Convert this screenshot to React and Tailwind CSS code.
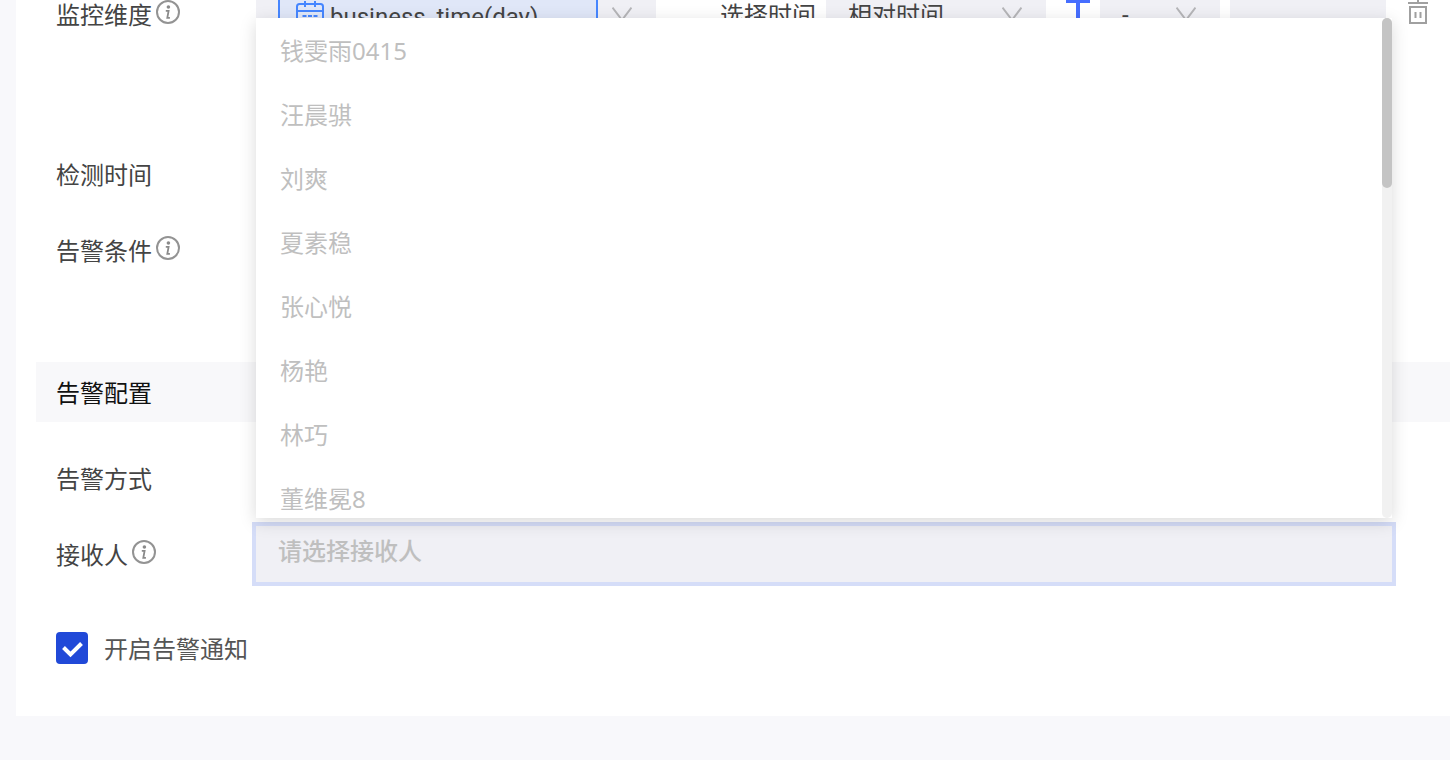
import React from "react";

const people = [
  "钱雯雨0415",
  "汪晨骐",
  "刘爽",
  "夏素稳",
  "张心悦",
  "杨艳",
  "林巧",
  "董维冕8",
];

function InfoIcon() {
  return (
    <svg viewBox="0 0 24 24" className="mb-1.5 ml-1 size-6 shrink-0" fill="none" aria-hidden="true">
      <circle cx="12" cy="12" r="11" stroke="#939393" strokeWidth="2" />
      <circle cx="12.4" cy="7" r="1.8" fill="#8a8a8a" />
      <path d="M9.8 10.8h2.8l-1.3 7h2.6" stroke="#8a8a8a" strokeWidth="1.8" />
    </svg>
  );
}

function Chevron({ className = "" }) {
  return (
    <svg viewBox="0 0 20 16" className={`h-4 w-5 shrink-0 ${className}`} fill="none" aria-hidden="true">
      <path d="M0.5 1.5L10 14L19.5 1.5" stroke="#b5b5b8" strokeWidth="2" />
    </svg>
  );
}

function CalendarIcon() {
  return (
    <svg viewBox="0 0 28 28" className="size-7 shrink-0" fill="none" stroke="#4686ff" strokeWidth="2" aria-hidden="true">
      <rect x="1" y="4" width="26" height="23" rx="2.5" />
      <path d="M1 11h26M9 1v6M19 1v6" />
      <path d="M6.5 16h4M12 16h4M17.5 16h4M6.5 21h4M12 21h4" />
    </svg>
  );
}

function Label({ text, htmlFor, info }) {
  return (
    <label htmlFor={htmlFor} className="flex items-center pt-0.5 text-[#444444]">
      {text}
      {info && <InfoIcon />}
    </label>
  );
}

function Row({ label, htmlFor, info, className = "", children }) {
  return (
    <div className={`grid h-15 grid-cols-[200px_1fr] items-center pl-10 ${className}`}>
      <Label text={label} htmlFor={htmlFor} info={info} />
      {children}
    </div>
  );
}

function Select({ id, label, value, className = "" }) {
  return (
    <div className={`grid h-15 items-center ${className}`}>
      <select
        id={id}
        aria-label={label}
        className="col-start-1 row-start-1 h-full w-full appearance-none bg-[#f0f0f5] pt-0.5 pl-[22px] text-[#444444] outline-none"
      >
        <option>{value}</option>
      </select>
      <Chevron className="pointer-events-none col-start-1 row-start-1 mr-6 justify-self-end" />
    </div>
  );
}

function DimensionControls() {
  return (
    <div className="flex items-center">
      <button
        id="dimension"
        type="button"
        className="flex h-15 w-[400px] shrink-0 items-center bg-[#f0f0f5] pl-[22px] text-[#444444]"
      >
        <span className="flex h-full w-80 items-center gap-1.5 border-2 border-[#4686ff] bg-[#e0e7f8] pl-4 font-[Roboto]">
          <CalendarIcon />
          <span className="pt-1.5">business_time(day)</span>
        </span>
        <Chevron className="ml-3.5" />
      </button>
      <label htmlFor="time-mode" className="ml-16 w-[106px] shrink-0 pt-0.5 text-[#444444]">
        选择时间
      </label>
      <Select id="time-mode" value="相对时间" className="w-[220px] shrink-0" />
      <button type="button" aria-label="T" className="mr-2.5 ml-5 w-6 shrink-0">
        <svg viewBox="0 0 24 28" className="h-7 w-6" fill="#466eff" aria-hidden="true">
          <path d="M0 0h24v3H14v25h-4V3H0z" />
        </svg>
      </button>
      <Select id="operator" label="运算符" value="-" className="w-[120px] shrink-0 font-[Roboto]" />
      <input aria-label="数值" className="ml-2.5 h-15 w-[156px] min-w-0 bg-[#f0f0f5] px-4 outline-none" />
      <button type="button" aria-label="删除" className="ml-[22px] shrink-0 pb-2">
        <svg viewBox="0 0 20 28" className="h-7 w-5" fill="none" stroke="#a0a0a0" strokeWidth="2" aria-hidden="true">
          <path d="M10 2V7M0 7h20M2 11h16v16H2z" />
          <path d="M7.5 16v6M12.5 16v6" />
        </svg>
      </button>
    </div>
  );
}

function ReceiverField() {
  return (
    <div className="relative mr-[58px]">
      <input
        id="receiver"
        role="combobox"
        aria-expanded="true"
        aria-controls="receiver-list"
        placeholder="请选择接收人"
        className="block h-14 w-full bg-[#f0f0f5] px-[22px] pb-2 font-medium ring-4 ring-[#d5ddf8] outline-none placeholder:text-[#bfbfbf]"
      />
      <div className="absolute inset-x-0 bottom-full mb-2 flex h-[500px] overflow-hidden bg-white shadow-[0_4px_16px_rgba(0,0,0,0.15)]">
        <ul id="receiver-list" role="listbox" aria-label="接收人" className="flex-1 overflow-hidden">
          {people.map((name) => (
            <li key={name} role="option" aria-selected="false" className="flex h-16 items-center px-6 pt-0.5 text-[#bfbfbf]">
              {name}
            </li>
          ))}
        </ul>
        <div className="w-2.5 rounded-full bg-[#f1f1f1]">
          <div className="h-[170px] rounded-full bg-[#c4c4c4]" />
        </div>
      </div>
    </div>
  );
}

export default function App() {
  return (
    <div className="min-h-screen overflow-hidden bg-[#f8f8fb] pb-11 pl-4 font-['Noto_Sans','Noto_Sans_CJK_SC',sans-serif] text-2xl leading-8">
      <main className="bg-white pb-[38px]">
        <Row label="监控维度" htmlFor="dimension" info className="-mt-4">
          <DimensionControls />
        </Row>
        <Row label="检测时间" className="mt-[100px]" />
        <Row label="告警条件" info className="mt-4" />
        <h2 className="mt-[82px] ml-5 flex h-15 items-center bg-[#f8f8fa] px-5 pt-0.5 text-[#111111]">
          告警配置
        </h2>
        <Row label="告警方式" className="mt-[26px]" />
        <Row label="接收人" htmlFor="receiver" info className="mt-4">
          <ReceiverField />
        </Row>
        <div className="mt-[34px] flex h-15 items-center pl-10">
          <span className="grid size-8">
            <input
              id="notify"
              type="checkbox"
              defaultChecked
              className="col-start-1 row-start-1 size-8 appearance-none rounded bg-[#2149d8]"
            />
            <svg viewBox="0 0 32 32" className="pointer-events-none col-start-1 row-start-1 size-8" fill="none" aria-hidden="true">
              <path d="M7.5 15.5L14.5 22.5L25.5 11.5" stroke="#ffffff" strokeWidth="4" />
            </svg>
          </span>
          <label htmlFor="notify" className="pt-0.5 pl-4 text-[#555555]">
            开启告警通知
          </label>
        </div>
      </main>
    </div>
  );
}
